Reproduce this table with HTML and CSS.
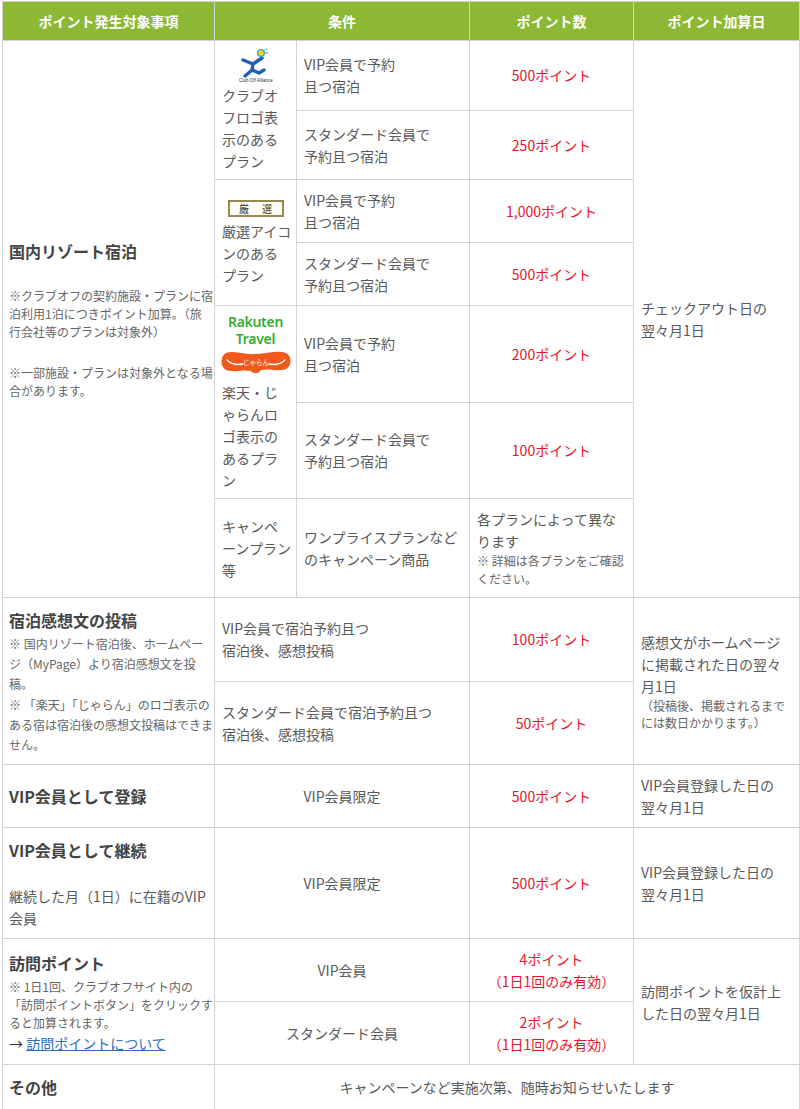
FILE: index.html
```html
<!DOCTYPE html>
<html lang="ja">
<head>
<meta charset="utf-8">
<title>ポイント発生対象事項</title>
<link rel="stylesheet" href="styles.css">
</head>
<body>
<div class="wrap">
<table class="points">
  <colgroup>
    <col class="c1"><col class="c2a"><col class="c2b"><col class="c3"><col class="c4">
  </colgroup>
  <thead>
    <tr>
      <th>ポイント発生対象事項</th>
      <th colspan="2">条件</th>
      <th>ポイント数</th>
      <th>ポイント加算日</th>
    </tr>
  </thead>
  <tbody>
    <tr>
      <td rowspan="7" class="item">
        <div class="item-title">国内リゾート宿泊</div>
        <p class="note note-a">※クラブオフの契約施設・プランに宿<br>泊利用1泊につきポイント加算。（旅<br>行会社等のプランは対象外）</p>
        <p class="note note-a">※一部施設・プランは対象外となる場<br>合があります。</p>
      </td>
      <td rowspan="2" class="plan">
        <svg class="club-logo" width="44" height="36" viewBox="0 0 44 36" aria-hidden="true">
          <path d="M9 12 L19 16 L28 10 M19 16 L18 22 M18 22 L11 28 M18 22 L25 25 L30 22" fill="none" stroke="#1f5fb8" stroke-width="3.4" stroke-linecap="round" stroke-linejoin="round"/>
          <circle cx="27" cy="5" r="3.4" fill="#ffd400" stroke="#29a8e0" stroke-width="1.3"/>
          <path d="M31 2 L33 1 M31.5 5 L34 5" stroke="#29a8e0" stroke-width="1" stroke-linecap="round"/>
          <text x="22" y="34" font-size="4.6" text-anchor="middle" fill="#333" font-family="Liberation Sans, sans-serif">Club Off Alliance</text>
        </svg>
        クラブオ<br>フロゴ表<br>示のある<br>プラン
      </td>
      <td class="cond">VIP会員で予約<br>且つ宿泊</td>
      <td class="pt">500ポイント</td>
      <td rowspan="7" class="date">チェックアウト日の<br>翌々月1日</td>
    </tr>
    <tr>
      <td class="cond">スタンダード会員で<br>予約且つ宿泊</td>
      <td class="pt">250ポイント</td>
    </tr>
    <tr>
      <td rowspan="2" class="plan">
        <span class="kensen"><span>厳</span><span>選</span></span>
        厳選アイコ<br>ンのある<br>プラン
      </td>
      <td class="cond">VIP会員で予約<br>且つ宿泊</td>
      <td class="pt">1,000ポイント</td>
    </tr>
    <tr>
      <td class="cond">スタンダード会員で<br>予約且つ宿泊</td>
      <td class="pt">500ポイント</td>
    </tr>
    <tr>
      <td rowspan="2" class="plan">
        <div class="rk-logo">
          <div class="rk-text">Rakuten<br>Travel</div>
          <svg class="jalan" width="70" height="24" viewBox="0 0 70 24" aria-hidden="true">
            <path d="M5 3 C13 0 22 5 35 4 C48 3 57 0 65 3 C71 6 71 16 65 19 C57 22 48 18 40 20 C38 24 32 24 30 21 C22 19 13 23 5 20 C-1 17 -1 6 5 3 Z" fill="#f0591b"/>
            <path d="M6 10 Q12 16 22 14 M48 14 Q58 16 64 10" fill="none" stroke="#fff" stroke-width="1.3" stroke-linecap="round"/>
            <text x="35" y="15" font-size="6.5" text-anchor="middle" fill="#fff" font-family="Noto Sans CJK JP, sans-serif">じゃらん</text>
          </svg>
        </div>
        楽天・じ<br>ゃらんロ<br>ゴ表示の<br>あるプラ<br>ン
      </td>
      <td class="cond">VIP会員で予約<br>且つ宿泊</td>
      <td class="pt">200ポイント</td>
    </tr>
    <tr>
      <td class="cond">スタンダード会員で<br>予約且つ宿泊</td>
      <td class="pt">100ポイント</td>
    </tr>
    <tr>
      <td class="plan">キャンペ<br>ーンプラン<br>等</td>
      <td class="cond">ワンプライスプランなど<br>のキャンペーン商品</td>
      <td class="pt-text">各プランによって異な<br>ります<span class="pt-note">※ 詳細は各プランをご確認<br>ください。</span></td>
    </tr>

    <tr>
      <td rowspan="2" class="item">
        <div class="item-title">宿泊感想文の投稿</div>
        <p class="note note-b">※ 国内リゾート宿泊後、ホームペー<br>ジ（MyPage）より宿泊感想文を投<br>稿。</p>
        <p class="note note-b">※ 「楽天」「じゃらん」のロゴ表示の<br>ある宿は宿泊後の感想文投稿はできま<br>せん。</p>
      </td>
      <td colspan="2" class="cond">VIP会員で宿泊予約且つ<br>宿泊後、感想投稿</td>
      <td class="pt">100ポイント</td>
      <td rowspan="2" class="date">感想文がホームページ<br>に掲載された日の翌々<br>月1日<span class="date-note">（投稿後、掲載されるまで<br>には数日かかります。）</span></td>
    </tr>
    <tr>
      <td colspan="2" class="cond">スタンダード会員で宿泊予約且つ<br>宿泊後、感想投稿</td>
      <td class="pt">50ポイント</td>
    </tr>

    <tr>
      <td class="item"><div class="item-title">VIP会員として登録</div></td>
      <td colspan="2" class="center">VIP会員限定</td>
      <td class="pt">500ポイント</td>
      <td class="date">VIP会員登録した日の<br>翌々月1日</td>
    </tr>

    <tr>
      <td class="item">
        <div class="item-title">VIP会員として継続</div>
        <p class="item-desc">継続した月（1日）に在籍のVIP<br>会員</p>
      </td>
      <td colspan="2" class="center">VIP会員限定</td>
      <td class="pt">500ポイント</td>
      <td class="date">VIP会員登録した日の<br>翌々月1日</td>
    </tr>

    <tr>
      <td rowspan="2" class="item">
        <div class="item-title">訪問ポイント</div>
        <p class="note note-c">※ 1日1回、クラブオフサイト内の<br>「訪問ポイントボタン」をクリックす<br>ると加算されます。</p>
        <div class="more">→ <a href="#">訪問ポイントについて</a></div>
      </td>
      <td colspan="2" class="center">VIP会員</td>
      <td class="pt">4ポイント<br>（1日1回のみ有効）</td>
      <td rowspan="2" class="date">訪問ポイントを仮計上<br>した日の翌々月1日</td>
    </tr>
    <tr>
      <td colspan="2" class="center">スタンダード会員</td>
      <td class="pt">2ポイント<br>（1日1回のみ有効）</td>
    </tr>

    <tr>
      <td class="item"><div class="item-title">その他</div></td>
      <td colspan="4" class="center">キャンペーンなど実施次第、随時お知らせいたします</td>
    </tr>
  </tbody>
</table>
</div>
</body>
</html>
```

FILE: styles.css
```css
* {
  box-sizing: border-box;
}

body {
  margin: 0;
  background: #ffffff;
  color: #595959;
  font-family: "Noto Sans CJK JP", "Noto Sans", sans-serif;
}

.wrap {
  padding: 1px 1px 0 2px;
}

.points {
  border-collapse: collapse;
  table-layout: fixed;
  width: 797px;
}

.c1 { width: 212px; }
.c2a { width: 82px; }
.c2b { width: 173px; }
.c3 { width: 164px; }
.c4 { width: 166px; }

.points th,
.points td {
  border: 1px solid #d3d3d3;
  padding: 9px 7px;
  font-size: 14px;
  line-height: 22px;
  font-weight: 400;
  vertical-align: middle;
  text-align: left;
  white-space: nowrap;
}

.points th {
  background: #8cb834;
  color: #ffffff;
  font-weight: 700;
  text-align: center;
  padding: 8px 7px;
}

.points td.item {
  padding-left: 6px;
}

.item-title {
  font-size: 16px;
  line-height: 26px;
  font-weight: 700;
  color: #444444;
}

.note {
  margin: 0;
  font-size: 12px;
  color: #666666;
}

.note-a {
  line-height: 18px;
  margin-top: 23px;
}

.note-b {
  line-height: 20px;
  margin-top: 1px;
}

.note-c {
  line-height: 18px;
  margin-top: 2px;
}

.item-desc {
  margin: 22px 0 0;
  font-size: 14px;
  line-height: 22px;
}

.more {
  font-size: 14px;
  line-height: 22px;
  color: #333333;
}

.more a {
  color: #2a6fbf;
  text-decoration: underline;
}

.points td.plan {
  padding-top: 7px;
  padding-bottom: 7px;
}

.club-logo {
  display: block;
  margin: 0 auto;
}

.kensen {
  display: flex;
  justify-content: center;
  gap: 13px;
  width: 56px;
  height: 17px;
  margin: 0 auto 3px;
  border: 2px solid #9c8650;
  background: #fffef6;
  color: #3a2e10;
  font-size: 10px;
  line-height: 13px;
}

.rk-logo {
  display: flex;
  flex-direction: column;
  align-items: center;
  margin-bottom: 7px;
}

.rk-text {
  font-family: "Noto Sans", "Open Sans", sans-serif;
  font-size: 14px;
  line-height: 17px;
  font-weight: 600;
  letter-spacing: -0.3px;
  color: #36ad2f;
  text-align: center;
}

.jalan {
  display: block;
  margin-top: 3px;
}

.points td.pt {
  text-align: center;
  color: #e8142c;
}

.pt-note {
  display: block;
  font-size: 12px;
  line-height: 18px;
  color: #666666;
}

.date-note {
  display: block;
  font-size: 12px;
  line-height: 17px;
  color: #666666;
}

.points td.center {
  text-align: center;
}
```
